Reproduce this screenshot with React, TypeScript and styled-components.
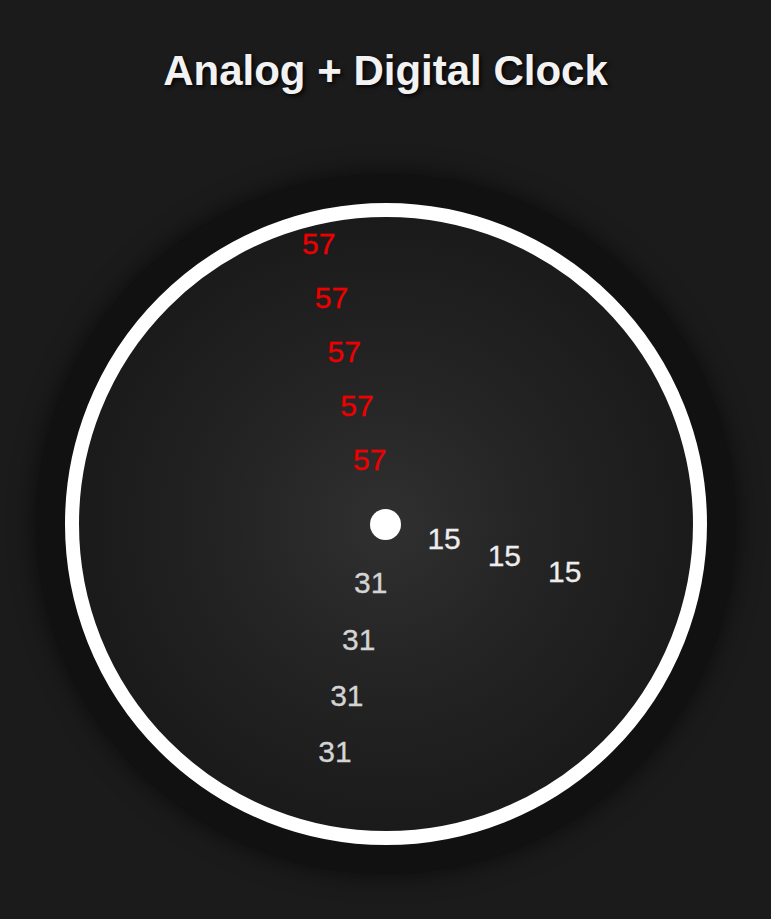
import styled, { createGlobalStyle } from 'styled-components';

const GlobalStyle = createGlobalStyle`
  html, body {
    margin: 0;
    padding: 0;
    background: #1b1b1b;
    font-family: "Liberation Sans", Arial, sans-serif;
  }
`;

const Page = styled.main`
  min-height: 100vh;
  display: flex;
  flex-direction: column;
  align-items: center;
`;

const Title = styled.h1`
  margin: 47px 0 79px;
  font-size: 42px;
  line-height: 48px;
  font-weight: 700;
  color: #f2f2f2;
  text-shadow: 2px 2px 4px rgba(0, 0, 0, 0.85);
`;

const Bezel = styled.div`
  padding: 29px;
  border-radius: 50%;
  background: #111111;
  box-shadow: 0 0 24px 2px rgba(0, 0, 0, 0.55);
`;

const Face = styled.div`
  position: relative;
  width: 614px;
  height: 614px;
  border: 14px solid #ffffff;
  border-radius: 50%;
  background: radial-gradient(circle at center, #303030 0%, #242424 35%, #1a1a1a 72%, #171717 100%);
`;

const Pivot = styled.div`
  position: absolute;
  left: 50%;
  top: 50%;
  width: 31px;
  height: 31px;
  margin: -15px 0 0 -16px;
  border-radius: 50%;
  background: #ffffff;
`;

const Digit = styled.span<{ $color: string }>`
  position: absolute;
  font-size: 30px;
  line-height: 30px;
  color: ${(p) => p.$color};
  white-space: nowrap;
  -webkit-text-stroke: 0.3px ${(p) => p.$color};
`;

// each hand is the digital value repeated along its direction,
// offsets are from the centre of the face
type Hand = {
  label: string;
  color: string;
  count: number;
  x: number;
  y: number;
  dx: number;
  dy: number;
};

const hands: Hand[] = [
  { label: '57', color: '#ee0000', count: 5, x: -32.5, y: -79.1, dx: -12.75, dy: -54 },
  { label: '15', color: '#ededed', count: 3, x: 41.9, y: -0.1, dx: 60.3, dy: 16.7 },
  { label: '31', color: '#d4d4d4', count: 4, x: -31.5, y: 44.3, dx: -11.9, dy: 56.3 },
];

const CENTER = 307;

export default function App() {
  return (
    <>
      <GlobalStyle />
      <Page>
        <Title>Analog + Digital Clock</Title>
        <Bezel>
          <Face>
            {hands.map((hand) =>
              Array.from({ length: hand.count }, (_, i) => (
                <Digit
                  key={hand.label + i}
                  $color={hand.color}
                  style={{
                    left: CENTER + hand.x + hand.dx * i,
                    top: CENTER + hand.y + hand.dy * i,
                  }}
                >
                  {hand.label}
                </Digit>
              ))
            )}
            <Pivot />
          </Face>
        </Bezel>
      </Page>
    </>
  );
}
